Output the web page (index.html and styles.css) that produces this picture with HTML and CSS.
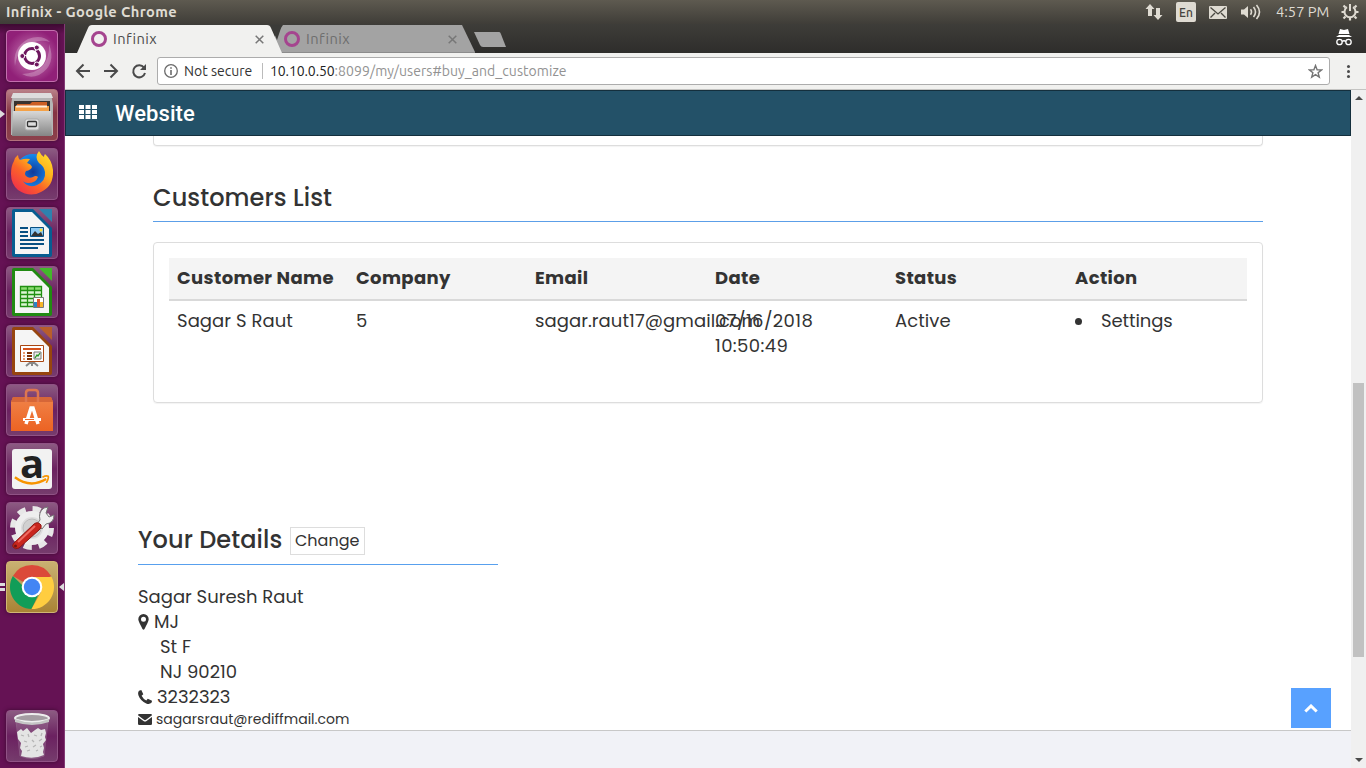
FILE: index.html
```html
<!DOCTYPE html>
<html lang="en">
<head>
<meta charset="utf-8">
<title>Infinix</title>
<link rel="stylesheet" href="styles.css">
</head>
<body>
<header class="panel">
  <span class="panel-title">Infinix - Google Chrome</span>
  <div class="indicators">
    <svg class="i-net" width="18" height="18" viewBox="0 0 18 18"><path d="M5 1 0.500 6H3v7h4V6h2.500zM13 17l4.500-5H15V5h-4v7H8.500z" fill="#dfdbd2"/></svg>
    <span class="lang">En</span>
    <svg class="i-mail" width="18" height="13" viewBox="0 0 18 13"><rect width="18" height="13" rx="1" fill="#dfdbd2"/><path d="M1.500 1.500 9 8l7.500-6.500M1.500 11.500 6 7M16.500 11.500 12 7" fill="none" stroke="#4a4841" stroke-width="1.300"/></svg>
    <svg class="i-vol" width="20" height="16" viewBox="0 0 20 16"><path d="M0 5.500h3L7 2v12l-4-3.500H0z" fill="#dfdbd2"/><path d="M9.500 5.300q2 2.700 0 5.400M12.500 3q4 5 0 10M15.500 1q6 7 0 14" fill="none" stroke="#dfdbd2" stroke-width="1.600"/></svg>
    <span class="clock">4:57 PM</span>
    <svg class="i-gear" width="18" height="18" viewBox="0 0 18 18" fill="none" stroke="#dfdbd2"><path d="M6 4.200a5.500 5.500 0 1 0 6 0" stroke-width="2"/><path d="M9 1v7" stroke-width="2"/><path d="m4.500 4.500-2-2M13.500 4.500l2-2M3 9H.5M15 9h2.500M4.500 13.500l-2 2M13.500 13.500l2 2M9 15v2.500" stroke-width="2.200"/></svg>
  </div>
</header>
<div class="desktop">
<nav class="launcher">
  <div class="tile dash"><svg viewBox="0 0 52 52"><path d="M9 36Q6 18 22 9Q36 4 44 12Q30 8 17 18Q10 26 9 36M43 14Q51 35 33 45Q24 49 16 44Q44 43 43 14" fill="#fff" opacity=".25"/><circle cx="26" cy="26" r="14" fill="#fff"/><circle cx="26" cy="26" r="7.500" fill="none" stroke="#6d175e" stroke-width="3" stroke-dasharray="14.700 1" stroke-dashoffset="7"/><g fill="#6d175e" stroke="#fff"><circle cx="16.300" cy="26" r="2.500"/><circle cx="30.800" cy="17.500" r="2.500"/><circle cx="30.800" cy="34.500" r="2.500"/></g></svg></div>
  <div class="tile files"><svg viewBox="0 0 52 52"><defs><linearGradient id="mt" x2="0" y2="1"><stop stop-color="#d8d8d8"/><stop offset="1" stop-color="#858585"/></linearGradient></defs><path d="M7 5h38l2 10v31H5V15z" fill="#b5b5b5"/><path d="M7 4h38l2 5H5z" fill="#ddd"/><path d="M8 12h36v11H8z" fill="#383330"/><path d="M11 15h13l2-2h15v4H11z" fill="#cc5f24"/><path d="M9 17h34v5H9z" fill="#f4a147"/><path d="M10 16.500h31v2H10z" fill="#fff0db"/><path d="M7 22h38l1 25H6z" fill="url(#mt)"/><rect x="19" y="30" width="14" height="11" rx="2" fill="#ddd" stroke="#aaa"/><rect x="21.500" y="32.500" width="9" height="5" rx="1" fill="#ddd" stroke="#333" stroke-width="1.300"/></svg></div>
  <div class="tile"><svg viewBox="0 0 52 52"><defs><linearGradient id="fx" x1="1" x2=".2" y2="1"><stop stop-color="#ffe833"/><stop offset=".4" stop-color="#ffae1b"/><stop offset=".65" stop-color="#fb6428"/><stop offset="1" stop-color="#f02d4c"/></linearGradient><radialGradient id="fb"><stop stop-color="#123a9a"/><stop offset="1" stop-color="#148bef"/></radialGradient></defs><circle cx="27" cy="24" r="18" fill="url(#fb)"/><path d="M8 13q1-4 4-6 0 3 2 5 5-2 10-1l-3 4q4 1 5 4-1 3-6 4-2 3 0 5 3 3 7 1 3-2 5 0-2 6-10 6-4 0-6-3 6 9 15 5 9-4 8-13-1-6-6-9-5-6 0-12 2 4 5 6 0-2 1-3 7 6 8 16 1 16-12 22-11 6-23-2Q5 36 5 26q0-8 3-13" fill="url(#fx)"/></svg></div>
  <div class="tile"><svg viewBox="0 0 52 52"><path d="M8 2h19l19 19v27q0 2-2 2H8q-2 0-2-2V4q0-2 2-2" fill="#075d91"/><path d="M9 5h17l17 17v25H9z" fill="#f5f5f5"/><path d="M33 2h13v13z" fill="#2e81ae"/><path d="M14 21h8M14 25h8M14 29h8M14 33h24M14 37h24M14 41h18" stroke="#075083" stroke-width="2"/><path d="M24.500 20.500h13v9h-13z" fill="#8dcaf4" stroke="#075083"/><path d="m25 29 4-5 3 3 3-2 2 4z" fill="#333"/><circle cx="35" cy="23" r="1.500" fill="#fd3"/></svg></div>
  <div class="tile"><svg viewBox="0 0 52 52"><path d="M8 2h19l19 19v27q0 2-2 2H8q-2 0-2-2V4q0-2 2-2" fill="#218a12"/><path d="M9 5h17l17 17v25H9z" fill="#f5f5f5"/><path d="M33 2h13v13z" fill="#43b82b"/><path d="M14 20h22v20H14z" fill="#dcf6d4"/><path d="M14 20h22v4H14z" fill="#8cdd72"/><path d="M14.500 20.500h21v20h-21zM14 24.500h22M14 28.500h22M14 32.500h22M14 36.500h22M21.500 20v20M28.500 20v20" fill="none" stroke="#219012" stroke-width="1.300"/><path d="M27.500 31.500h10v10h-10z" fill="#fff" stroke="#777"/><path d="M28 36h3v5h-3z" fill="#2b83c6"/><path d="M31 33h3v8h-3z" fill="#e0542a"/><path d="M34 36h3v5h-3z" fill="#f4b527"/></svg></div>
  <div class="tile"><svg viewBox="0 0 52 52"><path d="M8 2h19l19 19v27q0 2-2 2H8q-2 0-2-2V4q0-2 2-2" fill="#97450f"/><path d="M9 5h17l17 17v25H9z" fill="#f5f5f5"/><path d="M33 2h13v13z" fill="#b85e2b"/><path d="m26 36-6 5m6-5 6 5m-6-5v5" stroke="#888" stroke-width="2"/><path d="M14.500 20.500h23v16h-23z" fill="#fff" stroke="#a94612"/><path d="M17 24h18" stroke="#d5521c" stroke-width="2"/><path d="M17 28h2M17 31h2M17 34h2" stroke="#e89c70" stroke-width="2"/><path d="M21 28h5M21 31h5M21 34h5" stroke="#803306" stroke-width="2"/><path d="M28 27h7v7h-7z" fill="#eee" stroke="#777"/><path d="m29 33 2-3 1 1 2-3" fill="none" stroke="#249724" stroke-width="1.300"/></svg></div>
  <div class="tile"><svg viewBox="0 0 52 52"><defs><linearGradient id="bg" x2="0" y2="1"><stop stop-color="#f08349"/><stop offset="1" stop-color="#ec6323"/></linearGradient></defs><path d="M7 13h38l2 5v29H5V18z" fill="url(#bg)"/><path d="M5 18h42l-2-5H7z" fill="#d66638"/><path d="M20 18V9q0-3 3-3h6q3 0 3 3v9" fill="none" stroke="#dd7650" stroke-width="2.500"/><path d="m20 40 5-16h2l5 16" fill="none" stroke="#fff" stroke-width="3.500"/><path d="M17 34h18v3H17z" fill="#fff"/><path d="M19 35.500h9" stroke="#ed6b2e"/></svg></div>
  <div class="tile"><div class="amz"><span>a</span><svg viewBox="0 0 40 12"><path d="M2 2q16 12 33 2" fill="none" stroke="#f79400" stroke-width="2.500"/><path d="M31 2q4-2 6-1 1 2-2 7" fill="none" stroke="#f79400" stroke-width="1.800"/></svg></div></div>
  <div class="tile"><svg viewBox="0 0 52 52"><circle cx="26" cy="26" r="19" fill="none" stroke="#e7e7e7" stroke-width="6" stroke-dasharray="8 6.920"/><circle cx="26" cy="26" r="14" fill="#ddd" stroke="#eee" stroke-width="6"/><circle cx="26" cy="26" r="9" fill="#d1d1d1" stroke="#bbb"/><path d="m31 22 3-4q-2-8 4-12l4-1-2 6 3 4 5-2q0 8-8 9l-4 5z" fill="#eee" stroke="#777"/><path d="m8 41 20-19q4-3 7 1 1 3-2 5L13 46q-4 2-6-1-1-2 1-4" fill="#c9261e" stroke="#8d1814"/><path d="m12 40 17-16" stroke="#ee6b62" stroke-width="2"/><circle cx="9.500" cy="44" r="1.500" fill="#721511"/></svg></div>
  <div class="tile chrome-tile"><svg viewBox="0 0 52 52"><path d="M26 26 6.900 15A22 22 0 0 1 45.100 15z" fill="#db4939"/><path d="M26 26h-8L6.900 15A22 22 0 0 0 25.500 48l8-17z" fill="#119d58"/><path d="M26 16h19.600A22 22 0 0 1 25.500 48L35 31z" fill="#ffcd40"/><circle cx="26" cy="26" r="10.300" fill="#fff"/><circle cx="26" cy="26" r="8.200" fill="#4285f4"/></svg></div>
  <div class="tile trash"><svg viewBox="0 0 52 52"><path d="m10 11 4 35q12 5 24 0l4-35" fill="#c9b2c6" opacity=".2" stroke="#ddd"/><path d="m11 22 4-3 2 2 4-3 4 5 4-3 3-2 3 2 4-1 1 4-1 4 1 3-3 4 1 4-1 4 1 3q-11 5-23 1l1-5-2-3 1-5-3-4z" fill="#e4e4e4"/><path d="m15 25 3 1m4-2 1 3m5-2 3 1m5-3-1 3m-17 5 3 1m5-2 2 2m5-1 3-2m-17 8 3-1m5 1 3-2m4 2 2-1m-15 5 3-1m6 1 2-1" fill="none" stroke="#b5b5b5" stroke-width="1.300"/><ellipse cx="26" cy="8" rx="17" ry="4" fill="#a59da3" stroke="#eee" stroke-width="2"/><path d="M9 9q17 7 34 0v3q-17 6-34 0z" fill="#c5c5c5"/></svg></div>
  <i class="run"></i><i class="run-two"></i><i class="run focus"></i>
</nav>
<main class="browser">
  <div class="tabs">
    <svg class="tab-shapes" width="411" height="29" viewBox="65 24 411 29"><path d="M264 52 283 25H462L475 52z" fill="#a3a3a3"/><path d="M275 52.500h200" stroke="#8c8c8c"/><path d="M77 53 88 28q1-3 4-3h175q3 0 4 3l11 25z" fill="#f1f1ef"/><path d="m271 26 6 14 5-15h-11z" fill="#3b3b38"/></svg>
    <div class="tab one"><i class="ring"></i><span>Infinix</span><svg class="x" width="9" height="9" viewBox="0 0 9 9"><path d="m.7.7 7.600 7.600M8.300.7.7 8.300"/></svg></div>
    <div class="tab two"><i class="ring"></i><span>Infinix</span><svg class="x" width="9" height="9" viewBox="0 0 9 9"><path d="m.7.7 7.600 7.600M8.300.7.7 8.300"/></svg></div>
    <svg class="new-tab" width="32" height="15" viewBox="0 0 32 15"><path d="M0 0h25q1 0 1.500 1L32 15H9q-2 0-3-2z" fill="#a3a3a3"/></svg>
    <svg class="incog" width="18" height="17" viewBox="0 0 18 17"><path d="m5 0 4 1 4-1 1.500 5h-11zM1 8l3-2h10l3 2z" fill="#fff"/><g fill="none" stroke="#fff" stroke-width="1.300"><circle cx="4.500" cy="13" r="2.700"/><circle cx="13.500" cy="13" r="2.700"/><path d="M7 12.500q2-1.500 4 0"/></g></svg>
  </div>
  <div class="toolbar">
    <svg class="nav" width="72" height="18" viewBox="0 0 72 18" fill="none" stroke="#4a4a4a" stroke-width="2"><path d="M15 9H2.500M8.500 2.500 2 9l6.500 6.500M29 9h12.500M35.500 2.500 42 9l-6.500 6.500M69 5.700A6 6 0 1 0 70 11"/><path d="M71 2v6h-6z" fill="#4a4a4a" stroke="none"/></svg>
    <div class="omnibox">
      <svg width="14" height="14" viewBox="0 0 14 14" fill="none" stroke="#6b6b6b"><circle cx="7" cy="7" r="6.300" stroke-width="1.300"/><path d="M7 6v5M7 3.200v1.600" stroke-width="1.600"/></svg>
      <span class="sec">Not secure</span>
      <span class="url"><span class="host">10.10.0.50</span><span>:8099/my/users#buy_and_customize</span></span>
      <svg class="star" width="15" height="15" viewBox="0 0 15 15"><path d="m7.500 1.500 1.600 4.200 4.500.2-3.500 2.800 1.200 4.400-3.800-2.500-3.800 2.500 1.200-4.400L1.400 5.900l4.500-.2z" fill="none" stroke="#757575" stroke-width="1.400"/></svg>
    </div>
    <i class="kebab"></i>
  </div>
  <div class="view">
    <div class="page">
      <div class="site-bar"><svg width="18" height="14" viewBox="0 0 18 14" fill="#fff"><path d="M0 0h5v4H0zM6.500 0h5v4h-5zM13 0h5v4h-5zM0 5h5v4H0zM6.500 5h5v4h-5zM13 5h5v4h-5zM0 10h5v4H0zM6.500 10h5v4h-5zM13 10h5v4h-5z"/></svg><span class="brand">Website</span></div>
      <div class="content">
        <div class="prev-card"></div>
        <h2 class="h list-title">Customers List</h2>
        <section class="card">
          <div class="row head"><b>Customer Name</b><b>Company</b><b>Email</b><b>Date</b><b>Status</b><b>Action</b></div>
          <div class="row"><div>Sagar S Raut</div><div>5</div><div>sagar.raut17@gmail.com</div><div class="date">07/16/2018<br>10:50:49</div><div>Active</div><div class="bullet"><span>Settings</span></div></div>
        </section>
        <section class="details">
          <h2 class="h"><span>Your Details</span><a class="change">Change</a></h2>
          <div class="line"><span>Sagar Suresh Raut</span></div>
          <div class="line"><svg width="11" height="16" viewBox="0 0 11 16"><path fill-rule="evenodd" d="M5.500 0A5.200 5.200 0 0 0 .3 5.200Q.3 7 3 12l1.500 3q1 1.400 2 0L8 12q2.700-5 2.700-6.800A5.200 5.200 0 0 0 5.500 0m0 2.700a2.500 2.500 0 1 1 0 5 2.500 2.500 0 0 1 0-5"/></svg><span>MJ</span></div>
          <div class="line in"><span>St F</span></div>
          <div class="line in"><span>NJ 90210</span></div>
          <div class="line tel"><svg width="14" height="14" viewBox="0 0 14 14"><path d="M1 .8 3.300 0l2 4.200-1.700 1.600Q5.200 9 8.300 10.500L9.800 8.700 14 10.800q0 1.500-.8 2.300-2 1.500-5 .3Q2.500 11 .5 5.500-.5 2.500 1 .8"/></svg><span>3232323</span></div>
          <div class="line mail"><svg width="14" height="11" viewBox="0 0 14 11"><path d="M0 1.200Q0 0 1.200 0h11.600Q14 0 14 1.200L8 5.800q-1 .7-2 0zM0 3l5.500 4q1.500 1 3 0L14 3v6.800q0 1.200-1.200 1.200H1.200Q0 11 0 9.800z"/></svg><span>sagarsraut@rediffmail.com</span></div>
        </section>
        <a class="top"><svg width="14" height="9" viewBox="0 0 14 9"><path d="m1.300 7.500 5.700-5.500 5.700 5.500" fill="none" stroke="#fff" stroke-width="3"/></svg></a>
      </div>
      <footer class="foot"></footer>
    </div>
    <div class="scroll"><i class="up"></i><i class="thumb"></i><i class="down"></i></div>
  </div>
</main>
</div>
</body>
</html>
```
FILE: styles.css
```css
* { box-sizing: border-box; }
body { margin: 0; width: 1366px; height: 768px; overflow: hidden; display: flex; flex-direction: column; background: #fff; font-family: Ubuntu, "Noto Sans", sans-serif; }
svg { display: block; flex: none; }
span { white-space: nowrap; }
.panel { height: 24px; flex: none; display: flex; align-items: center; justify-content: space-between; padding: 0 7px 0 6px; background: linear-gradient(#5e5a50, #3f3d38); color: #dfdbd2; }
.panel-title { font-weight: 700; font-size: 14.67px; line-height: 24px; letter-spacing: .38px; }
.indicators { display: flex; align-items: center; height: 24px; }
.lang { width: 20px; height: 20px; margin-left: 13px; border-radius: 2px; background: #dfdbd2; color: #45433d; font-size: 12px; font-weight: 500; line-height: 21px; padding-left: 3px; }
.i-mail { margin-left: 13px; }
.i-vol { margin-left: 14px; }
.clock { width: 54px; margin-left: 15px; font-size: 14.67px; line-height: 22px; padding-bottom: 1px; }
.i-gear { margin-left: 11px; }
.desktop { flex: 1; min-height: 0; display: flex; }
.launcher { position: relative; width: 65px; flex: none; padding: 6px 0 6px 6px; display: flex; flex-direction: column; gap: 7px; background: linear-gradient(#3d0a32, #651254 10px); border-right: 1px solid #833a75; }
.tile { width: 52px; height: 52px; flex: none; border-radius: 4px; border: 1px solid #905285; background: linear-gradient(#8c5b82, #6b2160 50%, #763c6d); box-shadow: 0 0 4px #3c0a31; overflow: hidden; }
.tile svg { width: 52px; height: 52px; margin: -1px; }
.dash { background: radial-gradient(#cb82b8, #912078 75%); border-color: #c36fae; }
.files { background: linear-gradient(#b98088, #853443 45%, #8c414c); border-color: #b4717c; }
.chrome-tile { background: linear-gradient(#c9b172, #a98335); border-color: #d1b673; }
.trash { margin-top: auto; }
.amz { width: 40px; height: 40px; margin: 5px; background: #f2f2f2; border-radius: 3px; position: relative; text-align: center; }
.amz span { display: block; height: 40px; font: 700 40px/28px "Open Sans", sans-serif; color: #222; }
.tile .amz svg { position: absolute; left: 1px; bottom: 2px; width: 38px; height: 12px; margin: 0; }
.run { position: absolute; left: 0; top: 86px; border: 4px solid transparent; border-left: 5px solid #ddd; border-right: 0; }
.focus { left: auto; right: 0; top: 559px; border-left: 0; border-right: 5px solid #ddd; }
.run-two { position: absolute; left: 0; top: 559px; width: 5px; height: 8px; border: solid #ddd; border-width: 3px 0; }
.browser { flex: 1; min-width: 0; display: flex; flex-direction: column; }
.tabs { height: 29px; flex: none; position: relative; display: flex; background: linear-gradient(#3e3d39, #2e2d2b); }
.tab-shapes { position: absolute; left: 0; top: 0; }
.tab { position: relative; display: flex; align-items: center; height: 29px; width: 193px; font-size: 14.67px; letter-spacing: .4px; color: #4b4b4b; padding-left: 26px; }
.tab.two { color: #6e6e6e; }
.ring { width: 16px; height: 16px; border: 3px solid #a5458f; border-radius: 50%; margin-right: 6px; }
.tab .x { position: absolute; left: 190px; top: 11px; stroke: #777; stroke-width: 1.5; }
.new-tab { margin: 8px 0 0 23px; }
.incog { margin: 5px 13px 0 auto; }
.toolbar { height: 37px; flex: none; display: flex; align-items: center; background: #f1f1ef; border-bottom: 1px solid #c4c4c2; padding-left: 10px; }
.omnibox { width: 1173px; height: 28px; margin-left: 10px; border: 1px solid #acacac; border-radius: 3px; background: #fff; display: flex; align-items: center; padding: 0 6px; font-size: 14px; line-height: 26px; color: #333; }
.sec { width: 79px; margin-left: 6px; border-right: 1px solid #bbb; line-height: 16px; }
.url { margin-left: 7px; color: #929292; }
.host { color: #222; letter-spacing: -.1px; }
.host + span { letter-spacing: .06px; }
.star { margin-left: auto; }
.kebab { width: 3px; height: 3px; border-radius: 50%; background: #4a4a4a; margin-left: 17px; box-shadow: 0 -5px #4a4a4a, 0 5px #4a4a4a; }
.view { flex: 1; min-height: 0; display: flex; }
.page { flex: 1; display: flex; flex-direction: column; color: #333; fill: #333; font-family: Poppins, Inter, sans-serif; }
.site-bar { height: 46px; flex: none; background: #235168; border: 1px solid #142f3d; display: flex; align-items: center; padding-left: 13px; }
.brand { margin: 2px 0 0 18px; font: 500 22px/44px Roboto, sans-serif; letter-spacing: .1px; color: #fff; }
.site-bar svg { margin-top: -2px; }
.content { flex: 1; position: relative; padding: 0 88px; overflow: hidden; }
.prev-card { height: 10px; border: 1px solid #ddd; border-top: 0; border-radius: 0 0 4px 4px; box-shadow: 0 1px 1px rgba(0,0,0,.05); }
.h { margin: 0; font-weight: 500; font-size: 24px; line-height: 28px; letter-spacing: .08px; }
.list-title { margin-top: 37px; height: 39px; padding-top: 1px; border-bottom: 1px solid #5c9fe8; }
.card { margin-top: 20px; height: 161px; border: 1px solid #ddd; border-radius: 4px; padding: 15px; box-shadow: 0 1px 1px rgba(0,0,0,.05); }
.row { display: grid; grid-template-columns: 179px 179px 180px 180px 180px 180px; font-size: 18px; line-height: 25px; letter-spacing: .07px; padding-top: 7px; }
.row > * { padding-left: 8px; white-space: nowrap; }
.row .date { letter-spacing: .4px; }
.head { height: 43px; background: #f4f4f4; border-bottom: 2px solid #d9d9d9; letter-spacing: .36px; }
.bullet { display: flex; letter-spacing: -.1px; }
.bullet::before { content: ""; width: 7px; height: 7px; border-radius: 50%; background: #333; margin: 10px 19px 0 0; }
.details { width: 360px; margin: 121px 0 0 -15px; }
.details .h { display: flex; height: 41px; border-bottom: 1px solid #58a0ee; margin-bottom: 19px; line-height: 31px; }
.change { margin: 3px 133px 0 auto; height: 28px; width: 75px; border: 1px solid #ddd; padding-left: 4px; font-weight: 400; font-size: 16px; line-height: 26px; letter-spacing: 0; }
.line { display: flex; align-items: center; height: 25px; font-size: 18px; line-height: 25px; gap: 5px; }
.in { padding-left: 22px; }
.mail { height: 20px; font-size: 14px; gap: 4px; letter-spacing: .03px; }
.top { position: absolute; right: 20px; bottom: 2px; width: 40px; height: 40px; background: #58a1ff; display: flex; align-items: center; justify-content: center; }
.foot { height: 38px; flex: none; background: #f1f2f7; border-top: 1px solid #c8c8c8; }
.scroll { width: 15px; background: #f0f0f0; position: relative; }
.up, .down { position: absolute; left: 4px; top: 6px; border: 4px solid transparent; border-top: 0; border-bottom: 4px solid #4a4a4a; }
.down { top: auto; bottom: 6px; border-bottom: 0; border-top: 4px solid #4a4a4a; }
.thumb { position: absolute; left: 2px; top: 293px; width: 11px; height: 274px; background: #c1c1c1; }
```
